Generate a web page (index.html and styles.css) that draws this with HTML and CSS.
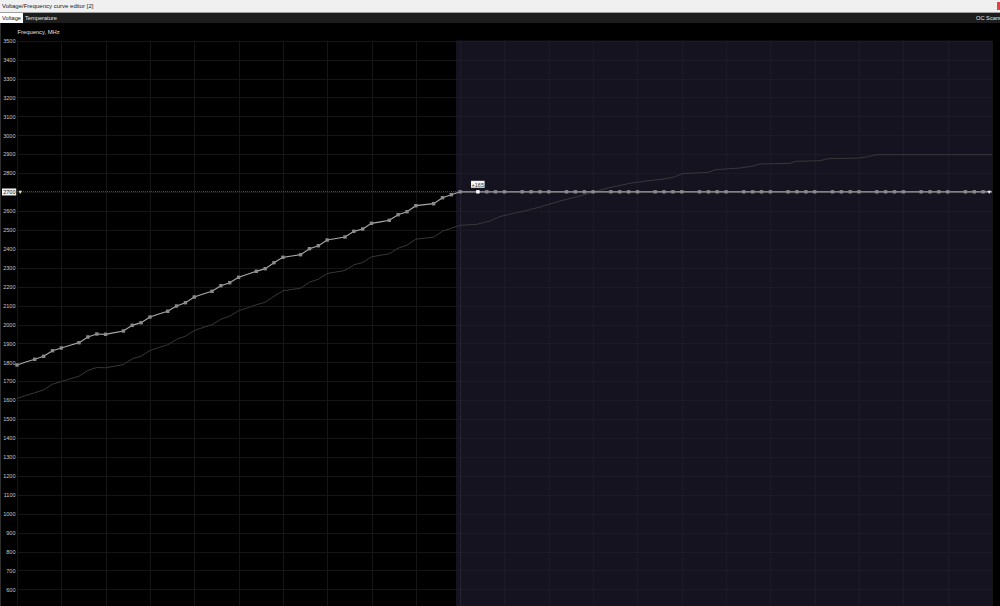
FILE: index.html
```html
<!DOCTYPE html>
<html lang="en">
<head>
    <meta charset="UTF-8">
    <title>Voltage/Frequency curve editor</title>
    <link rel="stylesheet" href="styles.css">
</head>
<body>
<div class="titlebar">
    <span class="title">Voltage/Frequency curve editor [2]</span>
    <span class="close"></span>
</div>
<div class="tabs">
    <span class="tab active">Voltage</span>
    <span class="tab">Temperature</span>
    <span class="tab oc">OC Scanner</span>
</div>
<div class="chart">
    <svg id="graph" width="1000" height="583" viewBox="0 23 1000 583"></svg>
</div>

<script>
    var svg = document.getElementById('graph'),
        NS = 'http://www.w3.org/2000/svg'

    function add(tag, attrs, parent) {
        var e = document.createElementNS(NS, tag)
        for (var k in attrs) e.setAttribute(k, attrs[k])
        ;(parent || svg).appendChild(e)
        return e
    }

    // chart box, in page pixels
    var gx = 17, gy = 40.7, gr = 992, gb = 606,
        colW = 44.318, rowH = 18.92, step = colW / 5

    function px(n) { return gx + step * n }

    // grid
    var grid = add('g', {'class': 'grid'})
    for (var i = 0; i <= 22; i++) {
        var x = Math.round(gx + i * colW) + 0.5
        add('line', {x1: x, y1: gy, x2: x, y2: gb}, grid)
    }
    for (var j = 0; j <= 29; j++) {
        var y = Math.round(gy + j * rowH) + 0.5
        add('line', {x1: gx, y1: y, x2: gr, y2: y}, grid)
    }

    // locked part of the curve
    add('rect', {x: 456, y: 40.5, width: 536, height: 566, 'class': 'shade'})
    add('line', {x1: 460.5, y1: 194, x2: 460.5, y2: gb, 'class': 'vref'})
    add('line', {x1: gx, y1: 191.5, x2: 460, y2: 191.5, 'class': 'ref'})

    // curve points 0..50, after that flat at 2700
    var main = [365, 362, 359.3, 356.3, 350.7, 348, 345.3, 342.7, 337, 334,
        334.3, 332.7, 331, 325.3, 322.7, 317, 314, 311.3, 306, 302.7,
        297, 294, 291.3, 285.7, 282.7, 277.3, 274.3, 271.3, 268.7, 262.7,
        257.3, 256, 254.7, 248.7, 245.7, 240, 238.5, 237, 231.3, 229,
        223.3, 221.8, 220.3, 214.7, 211.7, 205.7, 204.7, 203.7, 197.7, 194.7, 191.8]
    while (main.length < 111) main.push(191.8)

    // default curve (dim)
    var dim = []
    for (var n = 0; n <= 50; n++) dim.push(px(n).toFixed(1) + ',' + (main[n] + 33.5))
    var tail = [[477, 224.3], [490, 221], [500, 216.5], [520, 212], [540, 207], [560, 201],
        [580, 196], [593, 192], [610, 187.5], [630, 183.3], [650, 180.5], [662, 179.3],
        [673, 177.3], [683, 173.5], [700, 172.8], [708, 172.3], [716, 169.7], [740, 168],
        [753, 166], [760, 164], [790, 163.3], [796, 161.3], [820, 160.7], [828, 158.7],
        [860, 158], [866, 157], [877, 154.7], [992, 154.7]]
    tail.forEach(function (p) { dim.push(p[0] + ',' + p[1]) })
    add('polyline', {points: dim.join(' '), 'class': 'dim'})

    var pts = []
    for (var n = 0; n <= 110; n++) pts.push(px(n).toFixed(1) + ',' + main[n])
    add('polyline', {points: pts.join(' '), 'class': 'curve'})

    for (var n = 0; n < 110; n++) {
        if (n % 5 === 1) continue
        add('rect', {
            x: (px(n) - 1.7).toFixed(1), y: main[n] - 1.7, width: 3.4, height: 3.4,
            'class': n === 52 ? 'pt sel' : 'pt'
        })
    }

    // markers
    add('polygon', {points: '18.5,190.8 22,190.8 20.2,194', 'class': 'mark-l'})
    add('polygon', {points: '987.5,190.8 991,190.8 989.2,194', 'class': 'mark-r'})

    // offset tip
    add('rect', {x: 471, y: 180.8, width: 13.6, height: 7, 'class': 'tip'})
    add('text', {x: 477.8, y: 184.5, 'class': 'tip-txt'}).textContent = '+165'

    // axis
    add('text', {x: 17.5, y: 31.7, 'class': 'axis-title'}).textContent = 'Frequency, MHz'
    for (var j = 0; j <= 29; j++) {
        var y = gy + j * rowH,
            v = 3500 - j * 100
        if (v === 2700) add('rect', {x: 2, y: y - 3.6, width: 14.2, height: 7, 'class': 'lbl-box'})
        add('text', {x: 15.5, y: y + 0.2, 'class': v === 2700 ? 'lbl on' : 'lbl'}).textContent = v
    }
</script>
</body>
</html>
```

FILE: styles.css
```css
body{
    margin: 0;
    background: #000;
    overflow: hidden;
    font-family: "Liberation Sans", Arial, sans-serif;
}

/*window title*/
.titlebar{
    height: 12px;
    background: #f0f0f0;
    border-bottom: 1px solid #a0a0a0;
    display: flex;
    align-items: center;
}
.title{
    font-size: 6px;
    color: #222;
    padding-left: 2px;
}
.close{
    margin-left: auto;
    width: 3px;
    height: 8px;
    background: #e04343;
}

/*tabs*/
.tabs{
    height: 10px;
    background: #1d1d1d;
    display: flex;
    font-size: 5.7px;
    line-height: 10px;
    color: #e6e6e6;
}
.tab{
    padding: 0 2px;
}
.tab.active{
    background: #fff;
    color: #111;
}
.tab.oc{
    margin-left: auto;
    width: 22px;
    overflow: hidden;
    white-space: nowrap;
}

/*graph*/
.chart{
    height: 583px;
    border-left: 1px solid #2e2e2e;
}
.chart svg{
    display: block;
    margin-left: -1px;
}
.grid line{
    stroke: #151515;
    stroke-width: 1;
}
.shade{
    fill: rgba(31, 30, 48, 0.64);
}
.ref{
    stroke: #4e4e18;
    stroke-dasharray: 1 1;
}
.vref{
    stroke: #2a2938;
    stroke-dasharray: 1 1;
}
.dim{
    fill: none;
    stroke: #38383a;
    stroke-width: 1;
}
.curve{
    fill: none;
    stroke: #a8a8a8;
    stroke-width: 1.2;
}
.pt{
    fill: #8a8a8a;
}
.pt.sel{
    fill: #fff;
}
.mark-l{
    fill: #efe6a8;
}
.mark-r{
    fill: #f2f2f2;
}
.tip{
    fill: #f2f2f2;
}
.tip-txt{
    font: 5.5px "Liberation Sans", Arial, sans-serif;
    fill: #333;
    text-anchor: middle;
    dominant-baseline: central;
}
.axis-title{
    font: 5.8px "Liberation Sans", Arial, sans-serif;
    fill: #e0e0e0;
    dominant-baseline: central;
}
.lbl{
    font: 5.5px "Liberation Sans", Arial, sans-serif;
    fill: #c8c8c8;
    text-anchor: end;
    dominant-baseline: central;
}
.lbl.on{
    fill: #222;
}
.lbl-box{
    fill: #f0f0f0;
}
```
